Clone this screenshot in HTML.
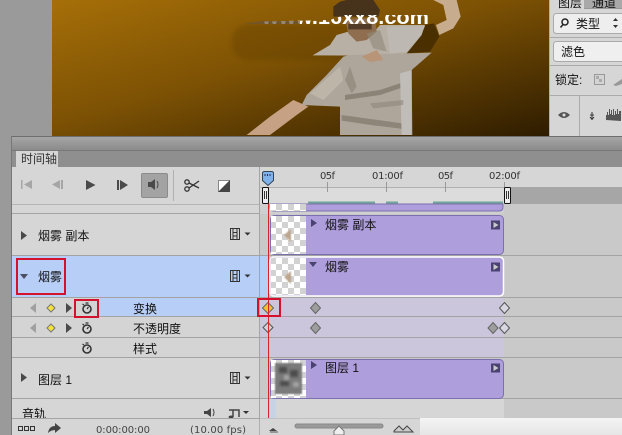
<!DOCTYPE html>
<html><head><meta charset="utf-8"><style>
html,body{margin:0;padding:0;width:622px;height:435px;overflow:hidden;background:#9a9a9a}
svg{display:block}
.c{font-family:"Liberation Sans","Noto Sans CJK SC",sans-serif;font-size:12px;fill:#111}
.n{font-family:"DejaVu Sans",sans-serif;font-size:10px;fill:#333}
</style></head><body>
<svg width="622" height="435" viewBox="0 0 622 435" xmlns="http://www.w3.org/2000/svg">
<defs>
<linearGradient id="bg" x1="0" y1="0" x2="1" y2="1"><stop offset="0" stop-color="#a66f08"/><stop offset=".45" stop-color="#7d5204"/><stop offset="1" stop-color="#2e1c00"/></linearGradient>
<linearGradient id="tb" x1="0" y1="0" x2="0" y2="1"><stop offset="0" stop-color="#a8a8a8"/><stop offset="1" stop-color="#8b8b8b"/></linearGradient>
<linearGradient id="br" x1="0" y1="0" x2="0" y2="1"><stop offset="0" stop-color="#f4f4f4"/><stop offset="1" stop-color="#e6e6e6"/></linearGradient>
<pattern id="ck" width="12" height="12" patternUnits="userSpaceOnUse"><rect width="12" height="12" fill="#fff"/><rect width="6" height="6" fill="#d2d2d2"/><rect x="6" y="6" width="6" height="6" fill="#d2d2d2"/></pattern>
<filter id="b2"><feGaussianBlur stdDeviation="2"/></filter>
<filter id="b3"><feGaussianBlur stdDeviation="0.9"/></filter>
<filter id="b4"><feGaussianBlur stdDeviation="1.400"/></filter>
<clipPath id="img"><rect x="52" y="0" width="497" height="136"/></clipPath>
<clipPath id="tx"><path d="M262 24L264 21.500L330 20L345 15H438V24z"/></clipPath>
<clipPath id="au"><rect x="0" y="399" width="260" height="19"/></clipPath>
<g id="film"><rect x="0" y="0" width="9" height="11" fill="none" stroke="#333" stroke-width="1"/><path d="M2.500 0v11M6.500 0v11M2.500 4h4M2.500 7.500h4" stroke="#333" stroke-width="1" fill="none"/><path d="M14 4h6l-3 3z" fill="#333"/></g>
<g id="sw"><circle cx="0" cy="1" r="4" fill="none" stroke="#333" stroke-width="1.600"/><path d="M-1.500-5h3M-4.500-4l1.500 1M0 1l1.500-2" stroke="#333" stroke-width="1.200" fill="none"/></g>
<g id="tab"><rect x="-4.500" y="-4.500" width="9" height="9" fill="#4a4270"/><path d="M-2-3l5 3-5 3z" fill="#c8c8c8"/></g>
</defs>

<rect width="622" height="435" fill="#9a9a9a"/>
<!-- canvas image -->
<g clip-path="url(#img)">
<rect x="52" y="0" width="497" height="136" fill="url(#bg)"/>
<rect x="232" y="24" width="125" height="36" rx="16" fill="#5e3e02" opacity=".35" filter="url(#b2)"/>
<g transform="translate(230 0) scale(.33333)">
<path d="M585 75L612 70L628 110L600 155L530 160z" fill="#4a3000"/>
<g filter="url(#b3)">
<path d="M610 0H680L692 50L670 85L628 105L618 75L650 60L640 15z" fill="#c8ac8e"/>
<path d="M50 405L120 350L190 300L235 320L200 345L120 405z" fill="#c6a183"/>
<path d="M310 20L330 5L350 0H430L450 30L445 50H310z" fill="#46321f"/>
<path d="M248 166L300 135L320 105L355 95L380 125L420 110L450 75H585L575 105L530 160L400 167z" fill="#b8b0a5"/>
<path d="M605 158L545 210L547 405H330V320L215 315L230 285L290 225L340 170L360 165z" fill="#aea69a"/>
<path d="M345 55H435L440 95L410 120L380 125L355 100z" fill="#8e6e50"/>
<path d="M355 72H425V88H355z" fill="#3c2a1a" opacity=".75"/>
<path d="M395 170L440 150L460 180L420 186z" fill="#b89478"/>
<path d="M470 80L585 78L570 110L530 155L480 160z" fill="#bdb8b2"/>
<path d="M345 285L450 270L540 240V255L450 285L345 300z" fill="#6e665a" opacity=".55"/>
<path d="M335 345L430 358L530 372V388L430 376L335 362z" fill="#787064" opacity=".6"/>
<path d="M510 220L545 210V405H515z" fill="#c0bcb8"/>
<path d="M240 280L330 200L340 240L280 300z" fill="#beb5a9"/>
<path d="M360 200L380 260L365 280L345 240z" fill="#8a8276" opacity=".6"/>
<path d="M420 310L520 300V315L430 325z" fill="#8c8478" opacity=".55"/>
<path d="M410 100L450 90L470 155L430 145z" fill="#908878" opacity=".6"/>
</g>
</g>
<g clip-path="url(#tx)"><text x="262" y="24" textLength="167" lengthAdjust="spacingAndGlyphs" font-family="Liberation Sans,sans-serif" font-weight="bold" font-size="20" fill="#fff">www.16xx8.com</text></g>
<path d="M243 24L262 21H300V24z" fill="#6b5638" opacity=".7"/>
</g>
<!-- right panel -->
<rect x="549" y="0" width="73" height="136" fill="#d6d6d6"/>
<rect x="549" y="0" width="1" height="136" fill="#b0b0b0"/>
<rect x="584" y="0" width="38" height="9" fill="#a9a9a9"/>
<rect x="584" y="8" width="38" height="1" fill="#999"/>
<text class="c" x="558" y="7">图层</text><text class="c" x="592" y="7">通道</text>
<rect x="553.500" y="13.500" width="72" height="20" rx="3" fill="#eeeeee" stroke="#aaa"/>
<circle cx="565" cy="22" r="3" fill="none" stroke="#222" stroke-width="1.500"/><path d="M563 24.500l-2.500 3" stroke="#222" stroke-width="1.500"/>
<text class="c" x="576" y="28">类型</text>
<path d="M613 21l2.500-3 2.500 3zM613 25l2.500 3 2.500-3z" fill="#333"/>
<rect x="549" y="37" width="73" height="1" fill="#aaa"/>
<rect x="553.500" y="41.500" width="72" height="20" rx="3" fill="#efefef" stroke="#aaa"/>
<text class="c" x="561" y="56">滤色</text>
<rect x="549" y="65" width="73" height="1" fill="#aaa"/>
<text class="c" x="555" y="84">锁定:</text>
<rect x="594.500" y="74.500" width="10" height="10" fill="#d4d4d4" stroke="#999"/>
<rect x="596" y="76" width="3" height="3" fill="#aaa"/><rect x="599" y="79" width="3" height="3" fill="#aaa"/>
<path d="M613 85l9-6v5l-6 2z" fill="#999"/>
<rect x="549" y="95" width="73" height="1" fill="#aaa"/>
<rect x="579" y="95" width="1" height="41" fill="#aaa"/>
<path d="M558 115q6-6 12 0q-6 6-12 0z" fill="#555"/><circle cx="564" cy="115" r="1.500" fill="#ddd"/>
<path d="M590 115h4M592 112v7M590 117l2 2.500 2-2.500" stroke="#333" fill="none"/>
<path d="M606 120v-5h1v-3h1v3h1v-6h1v5h1v-4h1v5h1v-6h1v6h1v-4h1v3h1v-5h1v5h1v-3h2v10z" fill="#555"/>

<!-- timeline panel -->
<rect x="12" y="136" width="610" height="299" fill="#d6d6d6"/>
<rect x="12" y="136" width="610" height="14" fill="url(#tb)"/>
<rect x="12" y="136" width="610" height="1" fill="#6e6e6e"/>
<rect x="12" y="150" width="610" height="17" fill="#8f8f8f"/>
<rect x="12" y="150" width="610" height="1" fill="#777"/>
<rect x="16" y="151" width="42" height="16" fill="#d6d6d6"/>
<rect x="11" y="136" width="1" height="299" fill="#777"/>
<text class="c" x="21" y="163" style="fill:#333">时间轴</text>

<!-- toolbar -->
<path d="M21 180v9h1.500v-9zM32 180v9l-8-4.500z" fill="#a6a6a6"/>
<path d="M63 180v9h-2v-9zM60 180v9l-8-4.500z" fill="#a6a6a6"/>
<path d="M86 180v10l9.500-5z" fill="#4a4a4a"/>
<path d="M117 180h2v10h-2zM120 180v10l8-5z" fill="#4a4a4a"/>
<rect x="141.500" y="173.500" width="26" height="24" rx="1.500" fill="#a3a3a3" stroke="#8b8b8b"/>
<path d="M148 182h3l4-3v11l-4-3h-3z" fill="#4a4a4a"/><path d="M157 181q2 3.500 0 7" stroke="#4a4a4a" fill="none"/>
<rect x="173" y="170" width="1" height="31" fill="#b0b0b0"/>
<circle cx="187" cy="182" r="2.200" fill="none" stroke="#333" stroke-width="1.300"/><circle cx="187" cy="189" r="2.200" fill="none" stroke="#333" stroke-width="1.300"/>
<path d="M189 183l10 5M189 188l10-7" stroke="#333" stroke-width="1.300"/>
<rect x="218.500" y="180.500" width="11" height="11" fill="#fff" stroke="#888"/><path d="M230 180v12h-12z" fill="#444"/>
<rect x="12" y="204" width="248" height="1" fill="#b5b5b5"/>
<rect x="12" y="213" width="248" height="1" fill="#a5a5a5"/>

<!-- right side bg -->
<rect x="260" y="167" width="362" height="251" fill="#c9c9c9"/>
<rect x="259" y="167" width="1" height="251" fill="#a5a5a5"/>
<rect x="260" y="167" width="362" height="20" fill="#d6d6d6"/>
<rect x="260" y="187" width="247" height="17" fill="#dcdcdc"/>
<rect x="507" y="187" width="115" height="17" fill="#a6a6a6"/>
<rect x="260" y="187" width="247" height="1" fill="#b0b0b0"/>
<rect x="260" y="204" width="244" height="10" fill="#cfcfcf"/>
<text class="n" x="320" y="179" textLength="15">05f</text>
<text class="n" x="372" y="179" textLength="31">01:00f</text>
<text class="n" x="438" y="179" textLength="15">05f</text>
<text class="n" x="489" y="179" textLength="31">02:00f</text>
<path d="M327.500 182v10M386.500 182v10M445.500 182v10M504.500 182v10" stroke="#999"/>

<!-- left rows -->
<rect x="12" y="214" width="247" height="42" fill="#d6d6d6"/>
<rect x="12" y="256" width="247" height="42" fill="#b7cef6"/>
<rect x="12" y="298" width="88" height="19" fill="#d4d4d4"/>
<rect x="100" y="298" width="159" height="19" fill="#b7cef6"/>
<rect x="12" y="317" width="247" height="40" fill="#d4d4d4"/>
<rect x="12" y="357" width="247" height="42" fill="#d6d6d6"/>
<rect x="12" y="399" width="247" height="19" fill="#d6d6d6"/>
<!-- right rows -->
<rect x="260" y="298" width="244" height="59" fill="#cbc6dc"/>
<rect x="260" y="399" width="244" height="19" fill="#d6d6d6"/>
<rect x="268" y="399" width="8" height="19" fill="#c7d3e4"/>
<rect x="260" y="256" width="9" height="42" fill="#b7cef6"/>
<path d="M12 255.500h610M12 297.500h610M12 316.500h610M12 337.500h610M12 357.500h610M12 398.500h610" stroke="#a3a3a3"/>

<!-- clips -->
<path d="M270 204h233v3q0 4-4 4H274q-4 0-4-4z" fill="#ae9edb" stroke="#7c6fb0"/>
<rect x="270" y="204" width="36" height="7" fill="url(#ck)"/>
<path d="M308 202.500h67M386 202.500h12M433 202.500h70" stroke="#6fa598" stroke-width="2"/>
<rect x="270.500" y="215.500" width="233" height="39" rx="4" fill="#ae9edb" stroke="#7c6fb0"/>
<rect x="271" y="216" width="35" height="38" fill="url(#ck)"/>
<rect x="270" y="257" width="233.500" height="39" rx="4" fill="#ae9edb" stroke="#fff" stroke-width="1.500"/>
<rect x="271" y="258" width="35" height="37" fill="url(#ck)"/>
<rect x="270.500" y="359.500" width="233" height="39" rx="4" fill="#ae9edb" stroke="#7c6fb0"/>
<rect x="271" y="360" width="35" height="38" fill="url(#ck)"/>
<path d="M284 235l7-6v13zM284 277l7-6v13z" fill="#bba58e" filter="url(#b3)"/>
<rect x="275" y="363" width="27" height="31" fill="#7a7a7a" filter="url(#b3)"/>
<path d="M279 367h8v6h-8zM290 370h8v7h-8zM280 381h9v5h-9z" fill="#4e4e4e" filter="url(#b4)"/>
<path d="M293 382h6v5h-6zM284 375h5v5h-5z" fill="#a4a4a4" filter="url(#b4)"/>
<path d="M311 219v8l6-4zM311 361v8l6-4z" fill="#4a4270"/>
<path d="M309 262h8l-4 5z" fill="#4a4270"/>
<text class="c" x="325" y="229">烟雾 副本</text>
<text class="c" x="325" y="271">烟雾</text>
<text class="c" x="325" y="372">图层 1</text>
<use href="#tab" x="495.500" y="225"/><use href="#tab" x="495.500" y="267"/><use href="#tab" x="495.500" y="368"/>

<!-- left labels -->
<path d="M21 231v9l6-4.500zM21 373v9l6-4.500z" fill="#4a4a4a"/>
<path d="M20 274h8l-4 5z" fill="#4a5060"/>
<text class="c" x="38" y="240">烟雾 副本</text>
<text class="c" x="38" y="281">烟雾</text>
<text class="c" x="38" y="384">图层 1</text>
<use href="#film" x="230.500" y="228.500"/><use href="#film" x="230.500" y="270.500"/><use href="#film" x="230.500" y="372.500"/>
<text class="c" x="133" y="313">变换</text>
<text class="c" x="133" y="333">不透明度</text>
<text class="c" x="133" y="353">样式</text>
<path d="M36 303v10l-6-5zM36 323v10l-6-5z" fill="#a0a0a0"/>
<path d="M66 303v10l6-5zM66 323v10l6-5z" fill="#4a4a4a"/>
<path d="M51 304l4 4-4 4-4-4z" fill="#f4e23c" stroke="#777"/><path d="M51 324l4 4-4 4-4-4z" fill="#f4e23c" stroke="#777"/>
<use href="#sw" x="87" y="308"/><use href="#sw" x="87" y="328"/><use href="#sw" x="87" y="348"/>
<g clip-path="url(#au)"><text class="c" x="22" y="418">音轨</text></g>
<path d="M204 411h3l4-3v9l-4-3h-3z" fill="#444"/><path d="M213 409q2 3.500 0 7" stroke="#444" fill="none"/>
<path d="M229 410h10v7M233 410v7" stroke="#444" stroke-width="1.500" fill="none"/><ellipse cx="231" cy="417" rx="2.500" ry="1.500" fill="#444"/><path d="M243 411h6l-3 3z" fill="#333"/>

<!-- keyframes -->
<path d="M268 302.500l5.500 5.500-5.500 5.500-5.500-5.500z" fill="#f4c030" stroke="#666"/>
<path d="M268 322.500l5 5-5 5-5-5z" fill="#d4d0de" stroke="#555"/>
<path d="M315.500 302.500l5 5.500-5 5.500-5-5.500zM315.500 322.500l5 5.500-5 5.500-5-5.500zM493 322.500l5 5.500-5 5.500-5-5.500z" fill="#9d9d9d" stroke="#666"/>
<path d="M504.500 302.500l5 5.500-5 5.500-5-5.500zM504.500 322.500l5 5.500-5 5.500-5-5.500z" fill="#d8d6e0" stroke="#555"/>

<!-- red line & handles -->
<rect x="268" y="187" width="1" height="231" fill="#d8222a"/>
<rect x="262.500" y="187.500" width="6" height="16" rx="1" fill="#eee" stroke="#111"/>
<path d="M264.500 191v8M266.500 191v8" stroke="#333"/>
<rect x="504.500" y="187.500" width="6" height="16" rx="1" fill="#eee" stroke="#111"/>
<path d="M506.500 191v8M508.500 191v8" stroke="#333"/>
<path d="M262.500 173.500q0-2 2-2h7q2 0 2 2v7l-5.500 5-5.500-5z" fill="#7fb2ea" stroke="#345"/>
<path d="M265 174v2M267.500 174v2M270 174v2" stroke="#234"/>

<!-- red boxes -->
<g fill="none" stroke="#d4122e" stroke-width="2">
<rect x="17" y="259" width="48" height="35"/>
<rect x="75" y="300" width="23" height="17"/>
<rect x="258" y="299" width="22" height="17"/>
</g>

<!-- bottom bar -->
<rect x="12" y="418" width="610" height="17" fill="#d6d6d6"/>
<rect x="12" y="418" width="248" height="1" fill="#a5a5a5"/>
<rect x="260" y="418" width="162" height="1" fill="#c0c0c0"/>
<rect x="259" y="419" width="1" height="16" fill="#b0b0b0"/>
<rect x="420" y="418" width="202" height="17" fill="url(#br)"/>
<path d="M18.500 426.500h4v4h-4zM24.500 426.500h4v4h-4zM30.500 426.500h4v4h-4z" fill="none" stroke="#333"/>
<path d="M48 433q1-7 7-7v-3l6 5-6 5v-3q-4 0-7 3z" fill="#444"/>
<text class="n" x="96" y="433" textLength="54" style="fill:#444">0:00:00:00</text>
<text class="n" x="190" y="433" textLength="56" style="fill:#444">(10.00 fps)</text>
<path d="M269 431l4-3 4 3z" fill="#444"/><path d="M270 432h8" stroke="#555"/>
<rect x="295" y="424" width="88" height="4" rx="2" fill="#9a9a9a" stroke="#888"/>
<path d="M334 435v-4l5-5 5 5v4z" fill="#eee" stroke="#777"/>
<path d="M394 431l5-5 4 4 4-4 6 6h-19z" fill="#ccc" stroke="#444"/>
</svg>
</body></html>
